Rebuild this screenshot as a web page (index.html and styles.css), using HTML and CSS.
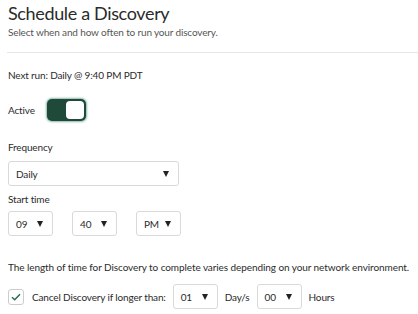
FILE: index.html
```html
<!DOCTYPE html>
<html lang="en">
<head>
    <meta charset="UTF-8">
    <meta name="viewport" content="width=device-width, initial-scale=1.0">
    <title>Schedule a Discovery</title>
    <link rel="stylesheet" href="styles.css">
</head>
<body>

<!-- Header -->
<header class="page-header">
    <h1>Schedule a Discovery</h1>
    <p class="subtitle">Select when and how often to run your discovery.</p>
</header>

<div class="content">
    <p class="next-run">Next run: Daily @ 9:40 PM PDT</p>

    <div class="active-row">
        <span>Active</span>
        <div class="toggle on"><div class="knob"></div></div>
    </div>

    <label class="field-label freq-label">Frequency</label>
    <div class="select wide">
        <span>Daily</span>
        <span class="caret"></span>
    </div>

    <label class="field-label time-label">Start time</label>
    <div class="time-row">
        <div class="select small"><span>09</span><span class="caret"></span></div>
        <div class="select small"><span>40</span><span class="caret"></span></div>
        <div class="select small"><span>PM</span><span class="caret"></span></div>
    </div>

    <p class="note">The length of time for Discovery to complete varies depending on your network environment.</p>

    <div class="cancel-row">
        <div class="checkbox checked">
            <svg width="10" height="8" viewBox="0 0 10 8"><path d="M1 4.2 L3.7 6.8 L9 1.2" fill="none" stroke="#2b6b57" stroke-width="1.5"/></svg>
        </div>
        <span class="cancel-label">Cancel Discovery if longer than:</span>
        <div class="select small"><span>01</span><span class="caret"></span></div>
        <span>Day/s</span>
        <div class="select small"><span>00</span><span class="caret"></span></div>
        <span>Hours</span>
    </div>
</div>

</body>
</html>
```

FILE: styles.css
```css
/* General styles */
body {
    font-family: Lato, "Open Sans", sans-serif;
    color: #2b2b2b;
    background-color: white;
    margin: 0;
    padding: 0;
}

/* Header */
.page-header {
    padding: 2px 0 0 1px;
    margin-left: 7px;
    border-bottom: 1px solid #e6e6e6;
    height: 53px;
    box-sizing: border-box;
}

.page-header h1 {
    margin: 0;
    font-size: 18px;
    letter-spacing: -0.35px;
    font-weight: normal;
    line-height: 22px;
    color: #2b2b2b;
}

.subtitle {
    margin: 1px 0 0 0;
    font-size: 10px;
    letter-spacing: -0.15px;
    line-height: 14px;
    color: #555;
}

/* Content */
.content {
    padding: 0 8px;
    font-size: 10px;
    letter-spacing: -0.15px;
}

.next-run {
    margin: 15px 0 0 0;
    line-height: 14px;
}

.active-row {
    display: flex;
    align-items: center;
    gap: 12px;
    margin-top: 17px;
}

.toggle {
    width: 39px;
    height: 22px;
    border-radius: 5px;
    background-color: #1f4a3a;
    box-shadow: 0 0 2px 1px rgba(45, 125, 105, 0.55);
    position: relative;
}

.toggle .knob {
    position: absolute;
    right: 2px;
    top: 2px;
    width: 18px;
    height: 18px;
    border-radius: 4px;
    background-color: white;
}

.field-label {
    display: block;
    line-height: 14px;
}

.freq-label {
    margin-top: 19px;
    margin-bottom: 7px;
}

.time-label {
    margin-top: 6px;
    margin-bottom: 5px;
}

.select {
    display: flex;
    align-items: center;
    justify-content: space-between;
    border: 1px solid #d9d9d9;
    border-radius: 3px;
    height: 25px;
    box-sizing: border-box;
    padding: 0 9px 0 7px;
    background-color: white;
}

.select.wide {
    width: 171px;
}

.select.small {
    width: 45px;
}

.caret {
    width: 0;
    height: 0;
    border-left: 3.5px solid transparent;
    border-right: 3.5px solid transparent;
    border-top: 6px solid #222;
}

.time-row {
    display: flex;
    gap: 19px;
}

.note {
    margin: 24px 0 0 0;
    line-height: 14px;
    letter-spacing: -0.08px;
    white-space: nowrap;
}

.cancel-row {
    display: flex;
    align-items: center;
    gap: 7px;
    margin-top: 10px;
}

.checkbox {
    width: 16px;
    height: 16px;
    border: 1px solid #ccc;
    border-radius: 3px;
    box-sizing: border-box;
    display: flex;
    align-items: center;
    justify-content: center;
    margin-right: 1px;
}
```
